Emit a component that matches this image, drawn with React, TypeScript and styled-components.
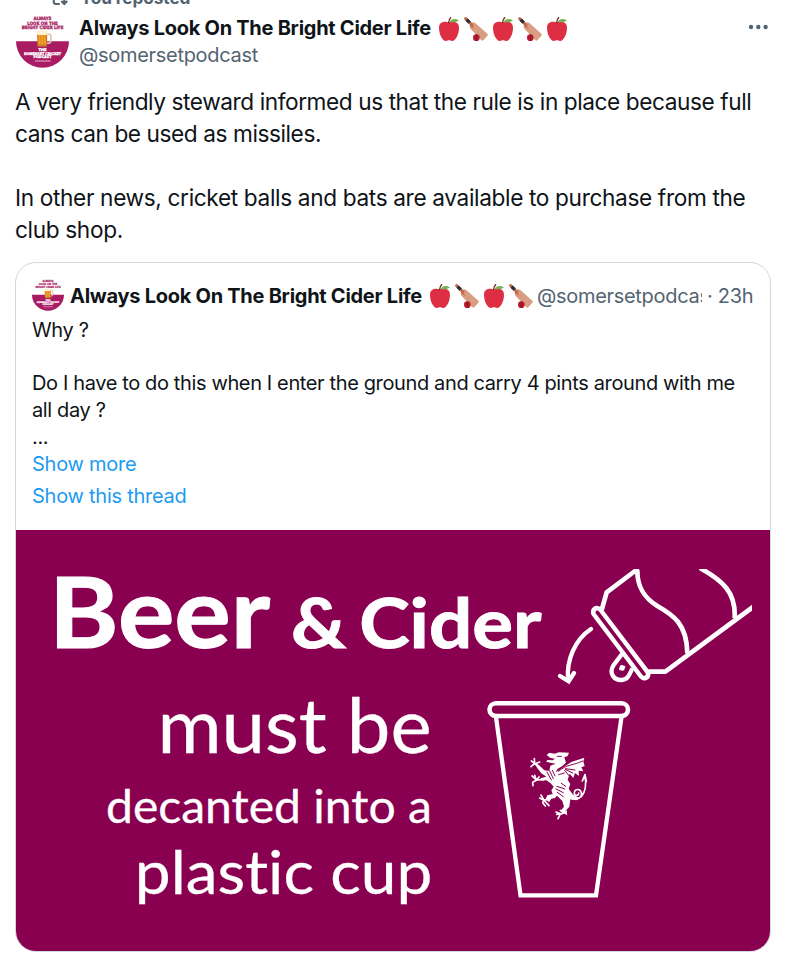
import styled, { createGlobalStyle } from "styled-components";

const GlobalStyle = createGlobalStyle`
  * {
    box-sizing: border-box;
  }

  body {
    margin: 0;
    background: #ffffff;
    color: #0f1419;
    font-family: Inter, "Liberation Sans", sans-serif;
  }
`;

const Page = styled.main`
  width: 792px;
  height: 964px;
  padding: 0 21px 0 15px;
  overflow: hidden;
`;

const Reposted = styled.div`
  display: flex;
  align-items: center;
  gap: 12px;
  height: 20px;
  margin-top: -12px;
  padding-left: 35px;
  color: #536471;
  font-size: 17.3px;
  font-weight: 700;
  line-height: 20px;
  letter-spacing: -0.1px;
`;

const Header = styled.header`
  display: flex;
  align-items: flex-start;
  margin-top: 7px;
  padding-left: 1px;
`;

const Names = styled.div`
  flex: 1;
  margin-left: 10px;
  line-height: 27px;
`;

const NameRow = styled.div`
  display: flex;
  align-items: center;
`;

const Name = styled.span`
  font-size: 20px;
  font-weight: 700;
  letter-spacing: -0.27px;
  white-space: nowrap;
`;

const Handle = styled.span<{ $width?: number }>`
  display: block;
  width: ${({ $width }) => ($width ? `${$width}px` : "auto")};
  overflow: hidden;
  color: #536471;
  font-size: 20px;
  letter-spacing: -0.3px;
  white-space: nowrap;
`;

const Emojis = styled.span`
  display: flex;
  gap: 3px;
  margin-left: 6px;

  svg {
    display: block;
  }
`;

const MoreButton = styled.button`
  margin: 8px 3px 0 0;
  padding: 0;
  border: 0;
  background: none;
  line-height: 0;
  cursor: pointer;
`;

const Body = styled.div`
  margin-top: 17px;
  font-size: 22.67px;
  line-height: 32px;
  white-space: nowrap;

  p {
    margin: 0 0 32px;
    letter-spacing: -0.43px;
  }

  p + p {
    margin-bottom: 16px;
    letter-spacing: -0.36px;
  }
`;

const Card = styled.article`
  width: 756px;
  height: 690px;
  border: 1px solid #cfd9de;
  border-radius: 21px;
  overflow: hidden;
`;

const QuoteHead = styled.div`
  display: flex;
  align-items: center;
  height: 32px;
  margin: 17px 16px 0;

  > svg {
    margin-bottom: 2px;
  }

  ${Name} {
    margin-left: 6px;
  }

  ${Handle} {
    margin-left: 4px;
  }
`;

const Time = styled.span`
  margin-left: 5px;
  color: #536471;
  font-size: 20px;
  letter-spacing: -0.3px;
  white-space: nowrap;
`;

const QuoteText = styled.div`
  margin: 5px 16px 0;
  font-size: 20px;
  line-height: 26.67px;
  letter-spacing: -0.37px;
  white-space: pre;
`;

const Links = styled.div`
  display: flex;
  flex-direction: column;
  align-items: flex-start;
  gap: 5px;
  height: 80px;
  margin: 0 16px;
  padding-top: 1px;

  a {
    color: #1d9bf0;
    font-size: 20px;
    line-height: 26.67px;
    letter-spacing: -0.25px;
    text-decoration: none;
  }
`;

const Poster = styled.div`
  display: grid;
  height: 423px;
  background: #8a0050;
  color: #ffffff;
  font-family: Lato, "Liberation Sans", sans-serif;

  > * {
    grid-area: 1 / 1;
  }
`;

const Slogan = styled.div`
  display: flex;
  flex-direction: column;
  width: 416px;
`;

const Headline = styled.div`
  display: flex;
  align-items: baseline;
  height: 104px;
  margin: 31px 0 0 33px;
  line-height: 100px;
  -webkit-text-stroke: 1px #ffffff;
`;

const Word = styled.span<{ $size: number; $stretch: number; $width: number }>`
  flex: none;
  width: ${({ $width }) => $width}px;
  font-size: ${({ $size }) => $size}px;
  font-weight: 700;
  word-spacing: -5px;
  white-space: nowrap;
  transform: scaleX(${({ $stretch }) => $stretch});
  transform-origin: left;
`;

const Line = styled.span<{ $size: number; $stretch: number; $height: number }>`
  align-self: flex-end;
  height: ${({ $height }) => $height}px;
  font-size: ${({ $size }) => $size}px;
  line-height: ${({ $height }) => $height}px;
  font-variant-ligatures: none;
  white-space: nowrap;
  -webkit-text-stroke: 0.3px #ffffff;
  transform: scaleX(${({ $stretch }) => $stretch});
  transform-origin: right;
`;

const Apple = () => (
  <svg width="24" height="24" viewBox="0 0 36 36">
    <path
      fill="#dd2e44"
      d="M24 7c-3 0-3 1-6 1s-3-1-6-1c-4 0-9 2-9 9 0 11 6 20 10 20 3 0 3-1 5-1s2 1 5 1c4 0 10-9 10-20 0-7-5-9-9-9z"
    />
    <path fill="none" stroke="#662113" strokeWidth="2" strokeLinecap="round" d="M17.5 8.500c0-3 1-6 3-7.500" />
    <path fill="#77b255" d="M19 7c3-5 8-5 14-2-3 3-9 4-14 2z" />
  </svg>
);

const Bat = () => (
  <svg width="24" height="24" viewBox="0 0 36 36">
    <path fill="#d99e82" d="M11 9c2-2 4-1 6 0l18 16c1 1 1 2 0 3l-6 7c-1 1-2 1-3 0L9 17c-1-3 0-6 2-8z" />
    <path fill="none" stroke="#c1694f" strokeWidth="4.500" strokeLinecap="round" d="M2.500 2.500L12 12" />
    <path fill="#c1694f" d="M9 8l7 10-7-4z" />
    <path fill="none" stroke="#292f33" strokeWidth="5" d="M4 4l4.500 4.500" />
    <circle cx="18.500" cy="31" r="5" fill="#be1931" />
    <path stroke="#662113" strokeWidth="1.400" d="M18.500 26v10" />
  </svg>
);

const badgeText: [string, number, number, number][] = [
  ["ALWAYS", 15, 14, 54],
  ["LOOK ON THE", 29, 14, 92],
  ["BRIGHT CIDER LIFE", 43, 14, 126],
  ["THE", 109, 11, 24],
  ["SOMERSET CRICKET", 120, 11, 112],
  ["PODCAST", 131, 11, 54],
];

const Avatar = ({ size }: { size: number }) => (
  <svg width={size} height={size} viewBox="0 0 160 160">
    <circle cx="80" cy="80" r="80" fill="#ffffff" />
    <path fill="#a91b63" d="M0 79h160a80 80 0 0 1-160 0z" />
    <g fontFamily="DejaVu Sans" fontWeight="700" textAnchor="middle" strokeWidth="1">
      {badgeText.map(([text, y, fontSize, length]) => (
        <text
          key={text}
          x="80"
          y={y}
          fontSize={fontSize}
          textLength={length}
          lengthAdjust="spacingAndGlyphs"
          fill={y < 79 ? "#a91b63" : "#ffffff"}
          stroke={y < 79 ? "#a91b63" : "#ffffff"}
        >
          {text}
        </text>
      ))}
    </g>
    <path stroke="#e9b6d0" strokeWidth="3" d="M57 139h48" />
    <path fill="none" stroke="#d9c4b8" strokeWidth="5" d="M92 58h9q4 0 4 4v17q0 5-5 6h-8" />
    <rect x="64" y="51" width="30" height="45" rx="3" fill="#c8762a" />
    <path fill="#f3a127" d="M68 60h22v30H68z" />
    <path stroke="#d97718" strokeWidth="2" d="M75 62v28M83 62v28" />
    <rect x="62" y="47" width="34" height="13" rx="5" fill="#fff2d3" />
  </svg>
);

const Artwork = () => (
  <svg width="754" height="422" viewBox="16 530 754 422" fill="none" stroke="#ffffff">
    {/* can being poured, on a grid three times finer than the poster */}
    <g transform="translate(540 550) scale(.33333)" strokeWidth="14" strokeLinejoin="round">
      <clipPath id="can">
        <path d="M0 57h636v400H0z" />
      </clipPath>
      <g clipPath="url(#can)">
        <path d="M185 180L200 127L285 63H292C292 115 316 145 352 168C398 194 441 221 442 310" />
        <path d="M320 365H376L650 163" />
        <path d="M480 54C548 92 588 126 584 204" />
      </g>
      <path d="M246 312L221 345C204 373 225 391 245 390C265 389 270 370 277 355" strokeWidth="13" />
      <path d="M244 349l8 2l-3 7l-8-1z" fill="#ffffff" strokeWidth="8" />
      <path d="M171 186L313 373" strokeWidth="37" strokeLinecap="round" />
      <path d="M172 187L312 372" stroke="#8a0050" strokeWidth="11" strokeLinecap="round" />
      <path d="M153 237C105 269 79 329 84 390" strokeLinecap="round" strokeWidth="13" />
      <path d="M60 378L86 394L102 369" strokeWidth="13" strokeLinejoin="miter" strokeLinecap="round" />
    </g>
    {/* cup */}
    <rect x="489.500" y="703.200" width="138.500" height="12.800" rx="6.400" strokeWidth="4.600" />
    <path d="M496 717L520.500 895.300H596L621.500 717" strokeWidth="4.300" />
    {/* dragon crest */}
    <g transform="translate(520 740) scale(.33333)" strokeLinecap="round" strokeLinejoin="round">
      <path
        fill="#ffffff"
        stroke="none"
        d="M80 45L88 38L104 41L117 37L147 38L143 48L133 52L138 68L126 79L112 87L108 97L127 84L154 66L193 53L190 65L194 78L184 82L190 94L176 92L177 108L165 99L160 114L149 101L143 119L151 132L146 146L158 163L179 175L169 181L151 178L148 200L139 210L142 226L129 219L122 212L132 200L127 183L111 167L105 174L94 176L87 187L77 176L82 166L98 162L94 151L101 140L92 130L79 121L65 122L61 115L79 110L64 100L51 83L46 69L56 74L73 91L88 93L91 77L107 71L95 69L78 65L83 60L98 61L105 56L91 54Z"
      />
      <g strokeWidth="5">
        <path d="M53 79L44 70L34 63M44 70L43 56M44 70L33 80M49 70L59 66" />
        <path d="M70 119L50 120L36 108M49 121L44 106M49 121L38 127L39 137M50 120L57 111" />
        <path d="M86 179L70 180L59 174M72 181L63 165M72 181L68 188L76 198M72 181L87 197" />
        <path d="M138 215L124 222L108 216M121 222L110 223M121 222L114 236M130 219L121 211" />
        <path d="M150 174C172 184 187 172 184 158C181 145 165 146 163 157C161 169 177 169 176 159M184 170C196 157 199 130 195 104L187 123M195 104L199 124" />
      </g>
      <g stroke="#8a0050" strokeWidth="3">
        <path d="M115 94C141 72 160 77 188 63" />
        <path d="M137 86L165 90M136 88L158 99M134 91L147 107" />
        <path d="M112 49H124M116 104L133 99" />
        <path d="M81 96L94 120M89 93L100 116M97 91L105 108" />
        <path d="M111 139L134 147M108 147L130 158M112 157L130 170M124 130L137 139" />
      </g>
    </g>
  </svg>
);

const nameText = "Always Look On The Bright Cider Life";

export default function App() {
  return (
    <>
      <GlobalStyle />
      <Page>
        <Reposted>
          <svg width="18" height="18" viewBox="0 0 24 24" fill="none" stroke="#536471" strokeWidth="2.700">
            <path d="M5 4v13q0 3 3 3h5M1 8l4-4 4 4M11 4h5q3 0 3 3v13M15 16l4 4 4-4" />
          </svg>
          You reposted
        </Reposted>
        <Header>
          <Avatar size={53} />
          <Names>
            <NameRow>
              <Name>{nameText}</Name>
              <Emojis>
                <Apple />
                <Bat />
                <Apple />
                <Bat />
                <Apple />
              </Emojis>
            </NameRow>
            <Handle>@somersetpodcast</Handle>
          </Names>
          <MoreButton aria-label="More">
            <svg width="20" height="8" viewBox="0 0 20 8" fill="#536471">
              <circle cx="3" cy="4" r="2.200" />
              <circle cx="10.300" cy="4" r="2.200" />
              <circle cx="17.600" cy="4" r="2.200" />
            </svg>
          </MoreButton>
        </Header>
        <Body>
          <p>
            A very friendly steward informed us that the rule is in place because full
            <br />
            cans can be used as missiles.
          </p>
          <p>
            In other news, cricket balls and bats are available to purchase from the
            <br />
            club shop.
          </p>
        </Body>
        <Card>
          <QuoteHead>
            <Avatar size={32} />
            <Name>{nameText}</Name>
            <Emojis>
              <Apple />
              <Bat />
              <Apple />
              <Bat />
            </Emojis>
            <Handle $width={165}>@somersetpodcast</Handle>
            <Time>· 23h</Time>
          </QuoteHead>
          <QuoteText>
            {"Why ?\n\nDo I have to do this when I enter the ground and carry 4 pints around with me\nall day ?\n..."}
          </QuoteText>
          <Links>
            <a href="#more">Show more</a>
            <a href="#thread">Show this thread</a>
          </Links>
          <Poster>
            <Slogan>
              <Headline>
                <Word $size={97} $stretch={1.09} $width={242}>
                  Beer
                </Word>
                <Word $size={69} $stretch={1.105} $width={250}>
                  &amp; Cider
                </Word>
              </Headline>
              <Line $size={75} $stretch={1.04} $height={118}>
                must be
              </Line>
              <Line $size={46} $stretch={1.045} $height={46}>
                decanted into a
              </Line>
              <Line $size={60} $stretch={1.065} $height={84}>
                plastic cup
              </Line>
            </Slogan>
            <Artwork />
          </Poster>
        </Card>
      </Page>
    </>
  );
}
